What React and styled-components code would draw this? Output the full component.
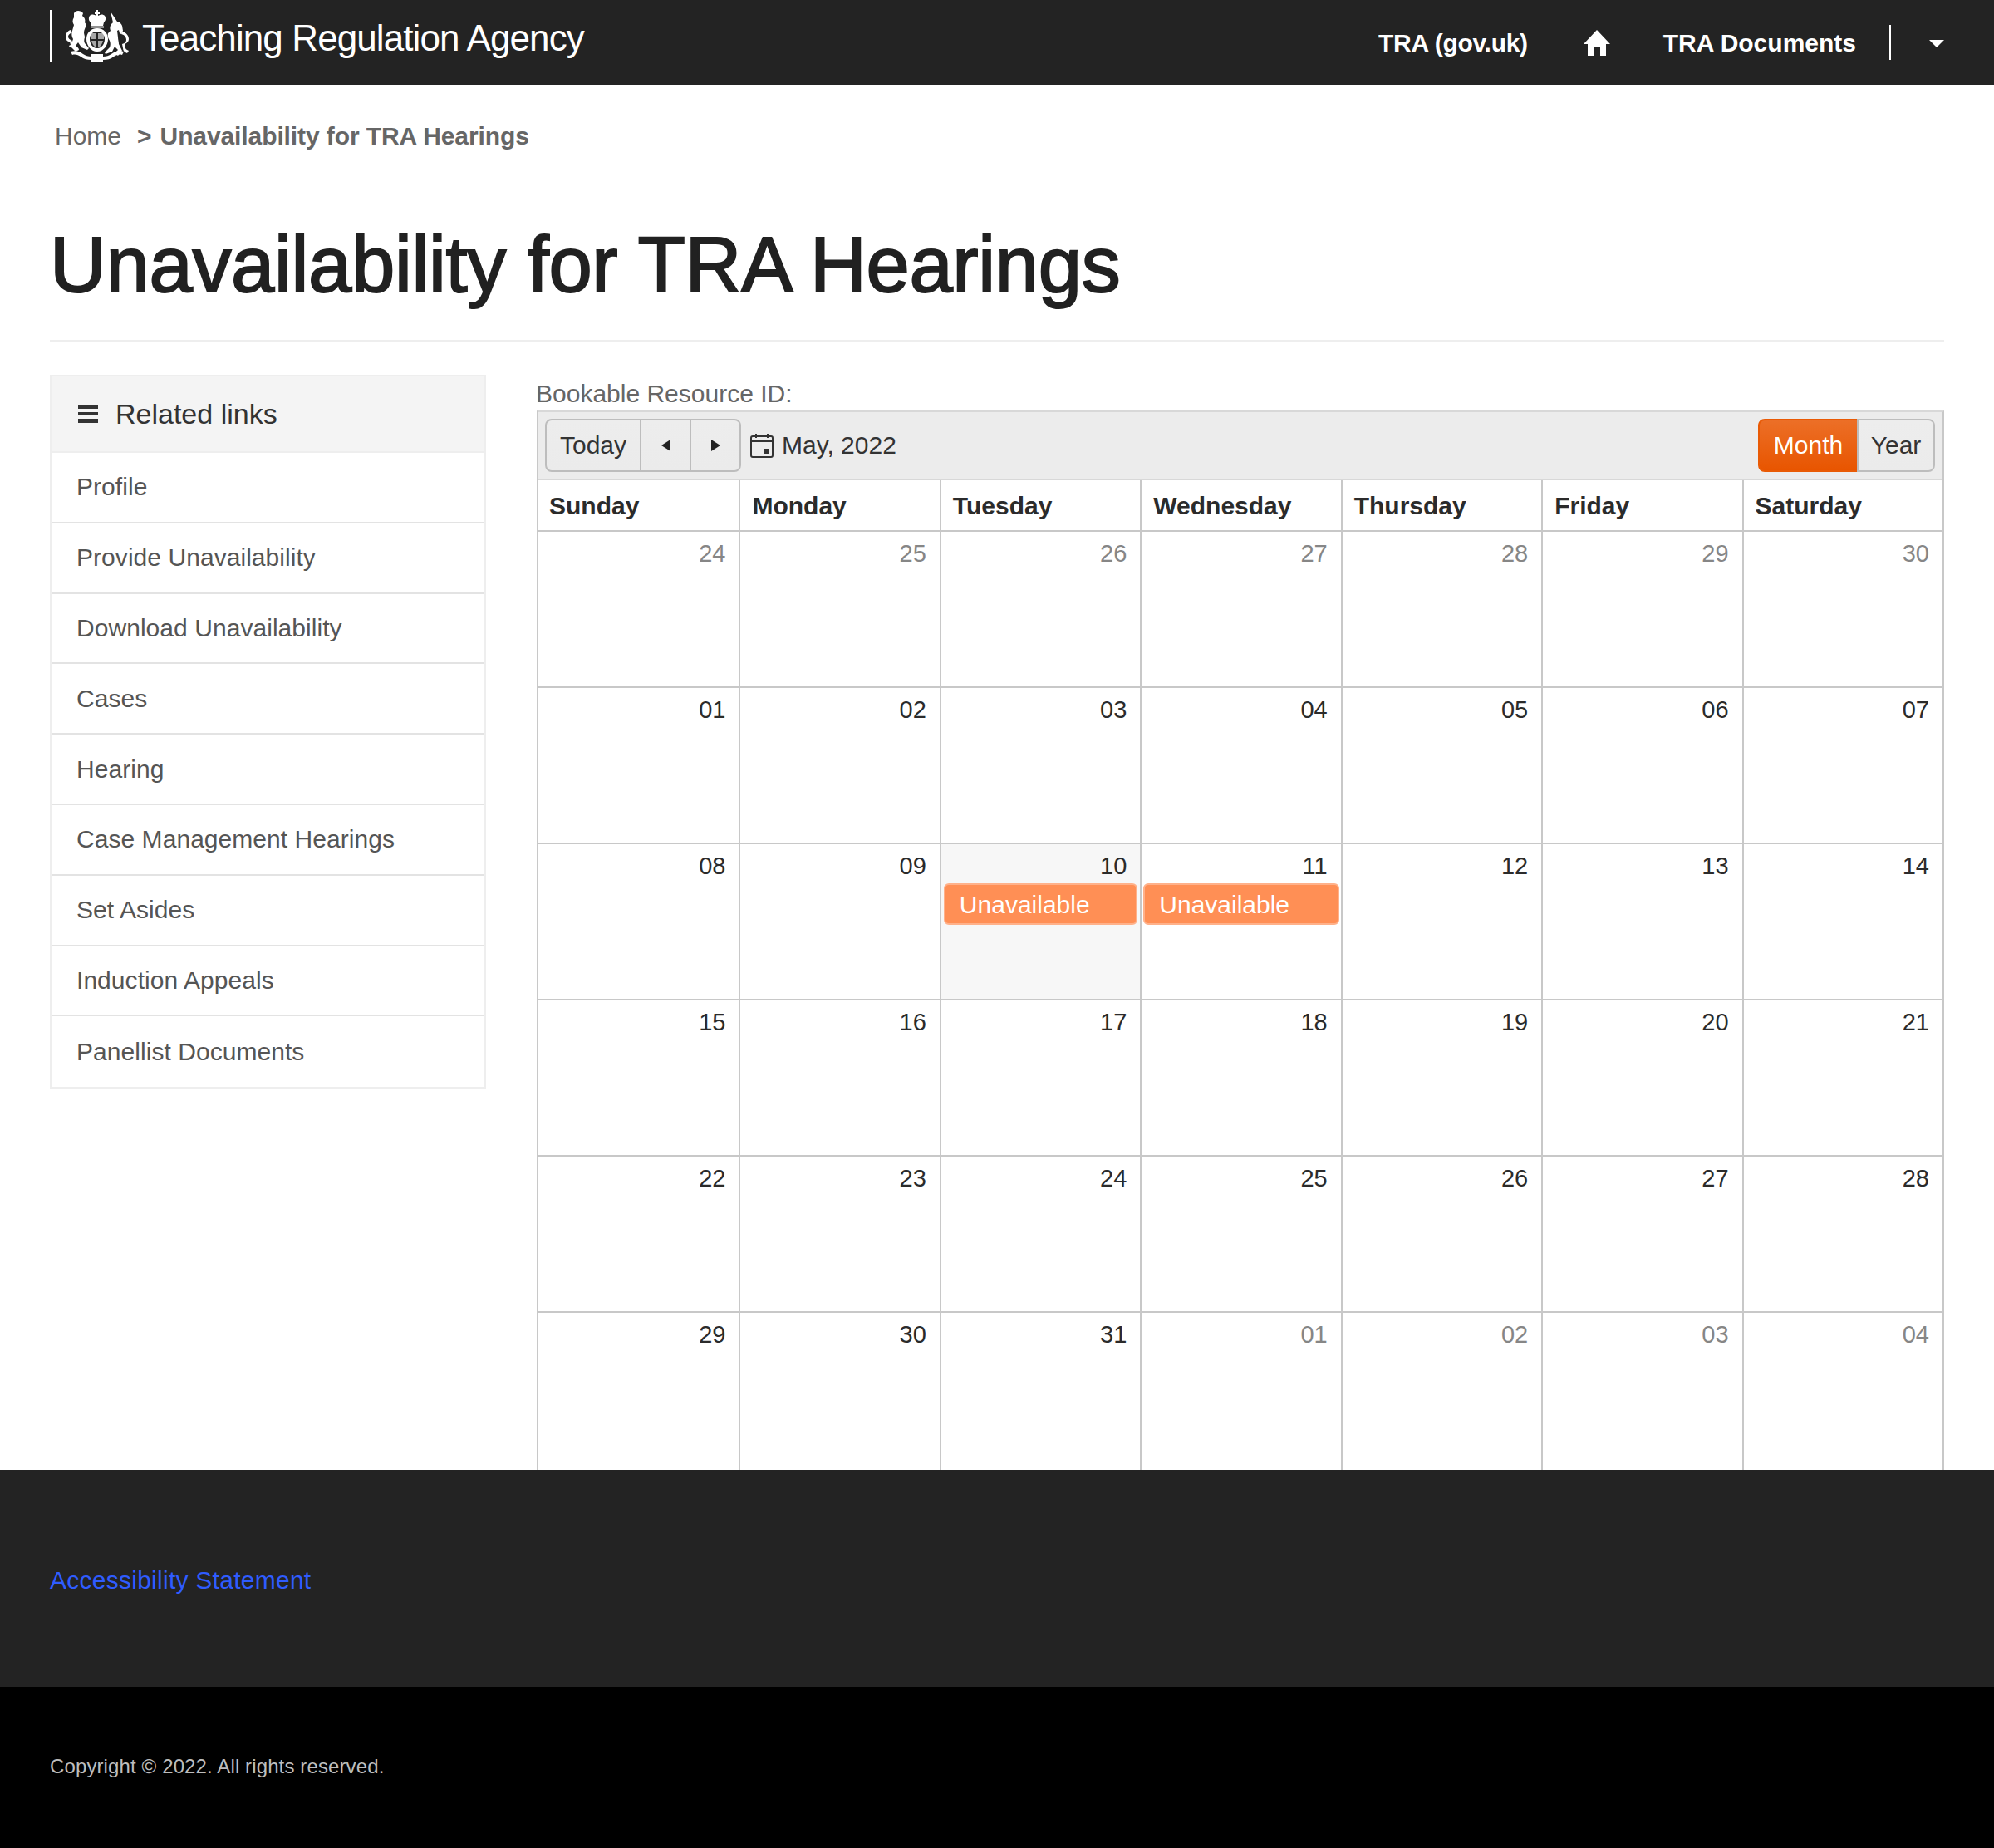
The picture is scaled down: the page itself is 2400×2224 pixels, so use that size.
import React from "react";
import styled, { createGlobalStyle } from "styled-components";

const GlobalStyle = createGlobalStyle`
  html, body {
    margin: 0;
    padding: 0;
    background: #fff;
    font-family: "Liberation Sans", Arial, sans-serif;
    color: #212121;
  }
  * {
    box-sizing: border-box;
  }
`;

const Page = styled.div`
  display: flex;
  flex-direction: column;
  min-height: 2224px;
`;

const Header = styled.header`
  display: flex;
  align-items: flex-start;
  justify-content: space-between;
  height: 102px;
  padding: 0 60px;
  background: #232323;
  color: #fff;
`;

const Brand = styled.div`
  display: flex;
  align-items: flex-start;
  padding-top: 12px;
`;

const BrandMark = styled.div`
  display: flex;
  align-items: center;
  height: 63px;
  padding-left: 16px;
  border-left: 3px solid #fff;
`;

const BrandName = styled.span`
  margin-left: 15px;
  padding-top: 2px;
  font-size: 44px;
  line-height: 63px;
  letter-spacing: -0.9px;
  white-space: nowrap;
`;

const Nav = styled.nav`
  display: flex;
  align-items: center;
  height: 102px;
`;

const NavLink = styled.a`
  padding-top: 2px;
  font-size: 30px;
  font-weight: 700;
  letter-spacing: ${(p) => p.$spacing}px;
  color: #fff;
  white-space: nowrap;
`;

const HomeLink = styled.a`
  display: flex;
  margin: 0 64px 0 67px;
  color: #fff;
`;

const NavDivider = styled.span`
  width: 2px;
  height: 42px;
  margin: 0 46px 0 40px;
  background: #fff;
`;

const NavCaret = styled.span`
  width: 0;
  height: 0;
  margin-top: 3px;
  border-left: 9px solid transparent;
  border-right: 9px solid transparent;
  border-top: 9px solid #fff;
`;

const Main = styled.main`
  flex: 1;
  padding: 0 60px;
`;

const Crumbs = styled.div`
  display: flex;
  padding: 42px 0 0 6px;
  font-size: 30px;
  line-height: 40px;
  color: #666;
`;

const CrumbSeparator = styled.span`
  margin: 0 10px 0 19px;
  font-weight: 700;
`;

const CrumbCurrent = styled.span`
  font-weight: 700;
  letter-spacing: -0.1px;
`;

const Title = styled.h1`
  margin: 83px 0 0;
  padding-bottom: 38px;
  border-bottom: 2px solid #eee;
  font-size: 94px;
  line-height: 104px;
  font-weight: 400;
  letter-spacing: -0.35px;
  color: #212121;
  -webkit-text-stroke: 2px #212121;
`;

const Columns = styled.div`
  display: flex;
  gap: 61px;
  margin-top: 40px;
`;

const Sidebar = styled.aside`
  flex: none;
  align-self: flex-start;
  width: 525px;
  border: 2px solid #eee;
`;

const SidebarHead = styled.div`
  display: flex;
  align-items: center;
  gap: 21px;
  height: 92px;
  padding-left: 32px;
  background: #f4f4f4;
  border-bottom: 2px solid #eee;
  font-size: 34px;
  color: #333;
`;

const SidebarItem = styled.a`
  display: flex;
  align-items: center;
  height: 84.8px;
  padding-left: 30px;
  border-bottom: 2px solid #e3e3e3;
  font-size: 30px;
  letter-spacing: 0.05px;
  color: #555;

  &:last-child {
    border-bottom: 0;
  }
`;

const Content = styled.section`
  flex: 1;
  min-width: 0;
`;

const ResourceLabel = styled.div`
  height: 43px;
  margin-left: -1px;
  padding-top: 5px;
  font-size: 30px;
  line-height: 36px;
  color: #666;
`;

const Calendar = styled.div`
  border: 2px solid #c8c8c8;
  border-top-color: #d8d8d8;
  border-bottom: 0;
`;

const Toolbar = styled.div`
  display: flex;
  align-items: center;
  justify-content: space-between;
  height: 82px;
  padding: 0 9px 0 8px;
  background: #ececec;
  border-bottom: 2px solid #d8d8d8;
`;

const ToolbarGroup = styled.div`
  display: flex;
  align-items: center;
`;

const ButtonGroup = styled.div`
  display: flex;
`;

const Button = styled.button`
  display: flex;
  align-items: center;
  justify-content: center;
  width: ${(p) => p.$width}px;
  height: 64px;
  padding: 0;
  margin-left: -2px;
  border: 2px solid ${(p) => (p.$active ? "#e95a05" : "#bdbdbd")};
  background: ${(p) =>
    p.$active
      ? "linear-gradient(#ec6f27, #e85500)"
      : "linear-gradient(#ededed, #ebebeb)"};
  font-family: inherit;
  font-size: 30px;
  color: ${(p) => (p.$active ? "#fff" : "#333")};

  &:first-child {
    margin-left: 0;
    border-radius: 8px 0 0 8px;
  }
  &:last-child {
    border-radius: 0 8px 8px 0;
  }
`;

const Arrow = styled.span`
  width: 0;
  height: 0;
  border-top: 7px solid transparent;
  border-bottom: 7px solid transparent;
  border-left: ${(p) => (p.$dir === "right" ? "11px solid #222" : "0")};
  border-right: ${(p) => (p.$dir === "left" ? "11px solid #222" : "0")};
`;

const MonthLabel = styled.div`
  display: flex;
  align-items: center;
  gap: 10px;
  margin-left: 11px;
  font-size: 30px;
  color: #333;
`;

const Grid = styled.div`
  display: grid;
  grid-template-columns: repeat(7, 1fr);
`;

const DayName = styled.div`
  height: 62px;
  padding: 0 0 0 ${(p) => (p.$first ? 13 : 14)}px;
  border-bottom: 2px solid #c8c8c8;
  border-left: ${(p) => (p.$first ? "0" : "2px solid #c8c8c8")};
  font-size: 30px;
  line-height: 62px;
  font-weight: 700;
  color: #2b2b2b;
`;

const DayCell = styled.div`
  display: flex;
  flex-direction: column;
  height: ${(p) => (p.$last ? 189 : 188)}px;
  padding: 3px 3px 0 3px;
  background: ${(p) => (p.$today ? "#f7f7f7" : "#fff")};
  border-bottom: ${(p) => (p.$last ? "0" : "2px solid #c8c8c8")};
  border-left: ${(p) => (p.$first ? "0" : "2px solid #c8c8c8")};
`;

const DayNumber = styled.div`
  padding-right: 13px;
  text-align: right;
  font-size: 29px;
  line-height: 47px;
  color: ${(p) => (p.$muted ? "#868686" : "#2b2b2b")};
`;

const EventChip = styled.div`
  height: 50px;
  margin: ${(p) => (p.$wide ? "-3px -1px 0 -1px" : "-3px 0 0 0")};
  padding-left: 17px;
  background: #ff8f55;
  border: 2px solid #ffb18a;
  border-radius: 6px;
  font-size: 30px;
  line-height: 48px;
  color: #fff;
  white-space: nowrap;
`;

const FooterLinks = styled.footer`
  display: flex;
  align-items: center;
  height: 261px;
  padding: 5px 60px 0;
  background: #232323;
`;

const FooterLink = styled.a`
  font-size: 30px;
  letter-spacing: 0.26px;
  color: #2f5cff;
`;

const Copyright = styled.div`
  display: flex;
  align-items: center;
  height: 194px;
  padding: 0 60px 2px;
  background: #000;
  font-size: 24px;
  letter-spacing: 0.12px;
  color: #bdbdbd;
`;

const Crest = () => (
  <svg width="77" height="63" viewBox="0 0 77 63" fill="#fff">
    {/* crown */}
    <path d="M37 0h2v3h2v2h-2v2c3-2 6-2 8 0 2 3 1 6-1 8l-1 4H31l-1-4c-2-2-3-5-1-8 2-2 5-2 8 0V5h-2V3h2z" />
    <rect x="30" y="19.5" width="16" height="2" />
    {/* shield in its garter */}
    <path
      fillRule="evenodd"
      d="M38 22c8 0 13 6 13 13s-5 15-13 15-13-8-13-15 5-13 13-13zm0 4c-6 0-9 4-9 9s3 11 9 11 9-6 9-11-3-9-9-9z"
    />
    <path d="M30 28h7v7h-7zM39 28h7v7h-7zM31 37h6v8c-3-1-5-4-6-8zM39 37h6c-1 4-3 7-6 8z" opacity="0.6" />
    {/* lion */}
    <path d="M10 4c1-2 3-3 5-3s5 1 6 3l-1 3c3 2 4 5 3 8l2 3c-1 3-3 6-3 9 0 2 1 4 1 6-1 3-1 5 0 7l5 6-2 2-7-3-4-6-3 4c2 1 4 3 4 5l-4 2-6-6 3-9c-2-3-2-7-1-10l2-7c-2-3-2-6 0-9z" />
    <path d="M6 24c-4 1-6 5-6 8 0 4 2 6 5 6l1 4-2 1 1 2c3 0 4-2 4-4l-2-5c-2 0-4-2-4-4s2-4 5-5z" />
    {/* unicorn */}
    <path d="M54 2l8 12c2 0 5 2 6 5l1 6-2 4-2-1-1-4-2 1 1 8c0 3 1 5 1 8l4 8-5 6-3-2c0-2 1-3 3-5l-4-4-3 6-8 3-1-2 6-6c1-3 1-5 0-8-2-3-3-6-2-9l3-3c-1-3-1-5 1-8l2-2z" />
    <path d="M68 26c5 1 8 5 8 9 0 3-2 5-5 6l1 5c1 2 3 2 4 3l-2 3c-3-1-5-3-5-6l-1-5c3-1 5-2 5-5s-2-6-6-7z" />
    {/* motto ribbon */}
    <path d="M6 50c6-2 11 0 15 3 3 2 6 3 10 3v-3h14v3c4 0 7-1 10-3 4-3 9-5 15-3l-2 4c-4-1-7 0-10 2-4 3-8 4-13 4v3H31v-3c-5 0-9-1-13-4-3-2-6-3-10-2z" />
  </svg>
);

const HomeIcon = () => (
  <svg width="32" height="32" viewBox="0 0 32 32" fill="currentColor">
    <path d="M16 1 0 18h5v14h7V21h8v11h7V18h5z" />
  </svg>
);

const MenuIcon = () => (
  <svg width="24" height="24" viewBox="0 0 24 24" fill="#333">
    <rect y="1" width="24" height="5" />
    <rect y="10" width="24" height="4" />
    <rect y="18" width="24" height="5" />
  </svg>
);

const CalendarIcon = () => (
  <svg width="28" height="30" viewBox="0 0 28 30" fill="none" stroke="#333" strokeWidth="2">
    <rect x="1" y="4" width="26" height="25" rx="2" />
    <path d="M1 10h26M7 1v5M21 1v5" />
    <rect x="16" y="19" width="7" height="6" fill="#333" stroke="none" />
  </svg>
);

const links = [
  "Profile",
  "Provide Unavailability",
  "Download Unavailability",
  "Cases",
  "Hearing",
  "Case Management Hearings",
  "Set Asides",
  "Induction Appeals",
  "Panellist Documents",
];

const weekDays = ["Sunday", "Monday", "Tuesday", "Wednesday", "Thursday", "Friday", "Saturday"];

const pad = (n) => String(n).padStart(2, "0");

// 24 Apr .. 4 Jun 2022
const days = [
  ...[24, 25, 26, 27, 28, 29, 30].map((n) => ({ n, muted: true })),
  ...Array.from({ length: 31 }, (_, i) => ({ n: i + 1 })),
  ...[1, 2, 3, 4].map((n) => ({ n, muted: true })),
];

const App = () => {
  return (
    <Page>
      <GlobalStyle />
      <Header>
        <Brand>
          <BrandMark>
            <Crest />
          </BrandMark>
          <BrandName>Teaching Regulation Agency</BrandName>
        </Brand>
        <Nav>
          <NavLink $spacing={-0.3}>TRA (gov.uk)</NavLink>
          <HomeLink>
            <HomeIcon />
          </HomeLink>
          <NavLink $spacing={0}>TRA Documents</NavLink>
          <NavDivider />
          <NavCaret />
        </Nav>
      </Header>

      <Main>
        <Crumbs>
          <span>Home</span>
          <CrumbSeparator>&gt;</CrumbSeparator>
          <CrumbCurrent>Unavailability for TRA Hearings</CrumbCurrent>
        </Crumbs>
        <Title>Unavailability for TRA Hearings</Title>

        <Columns>
          <Sidebar>
            <SidebarHead>
              <MenuIcon />
              Related links
            </SidebarHead>
            {links.map((l) => (
              <SidebarItem key={l}>{l}</SidebarItem>
            ))}
          </Sidebar>

          <Content>
            <ResourceLabel>Bookable Resource ID:</ResourceLabel>
            <Calendar>
              <Toolbar>
                <ToolbarGroup>
                  <ButtonGroup>
                    <Button $width={116}>Today</Button>
                    <Button $width={62}>
                      <Arrow $dir="left" />
                    </Button>
                    <Button $width={62}>
                      <Arrow $dir="right" />
                    </Button>
                  </ButtonGroup>
                  <MonthLabel>
                    <CalendarIcon />
                    May, 2022
                  </MonthLabel>
                </ToolbarGroup>
                <ButtonGroup>
                  <Button $width={121} $active>
                    Month
                  </Button>
                  <Button $width={94}>Year</Button>
                </ButtonGroup>
              </Toolbar>
              <Grid>
                {weekDays.map((d, i) => (
                  <DayName key={d} $first={i === 0}>
                    {d}
                  </DayName>
                ))}
                {days.map((d, i) => (
                  <DayCell key={i} $first={i % 7 === 0} $last={i >= 35} $today={i === 16}>
                    <DayNumber $muted={d.muted}>{pad(d.n)}</DayNumber>
                    {(i === 16 || i === 17) && <EventChip $wide={i === 17}>Unavailable</EventChip>}
                  </DayCell>
                ))}
              </Grid>
            </Calendar>
          </Content>
        </Columns>
      </Main>

      <FooterLinks>
        <FooterLink>Accessibility Statement</FooterLink>
      </FooterLinks>
      <Copyright>Copyright © 2022. All rights reserved.</Copyright>
    </Page>
  );
};

export default App;
